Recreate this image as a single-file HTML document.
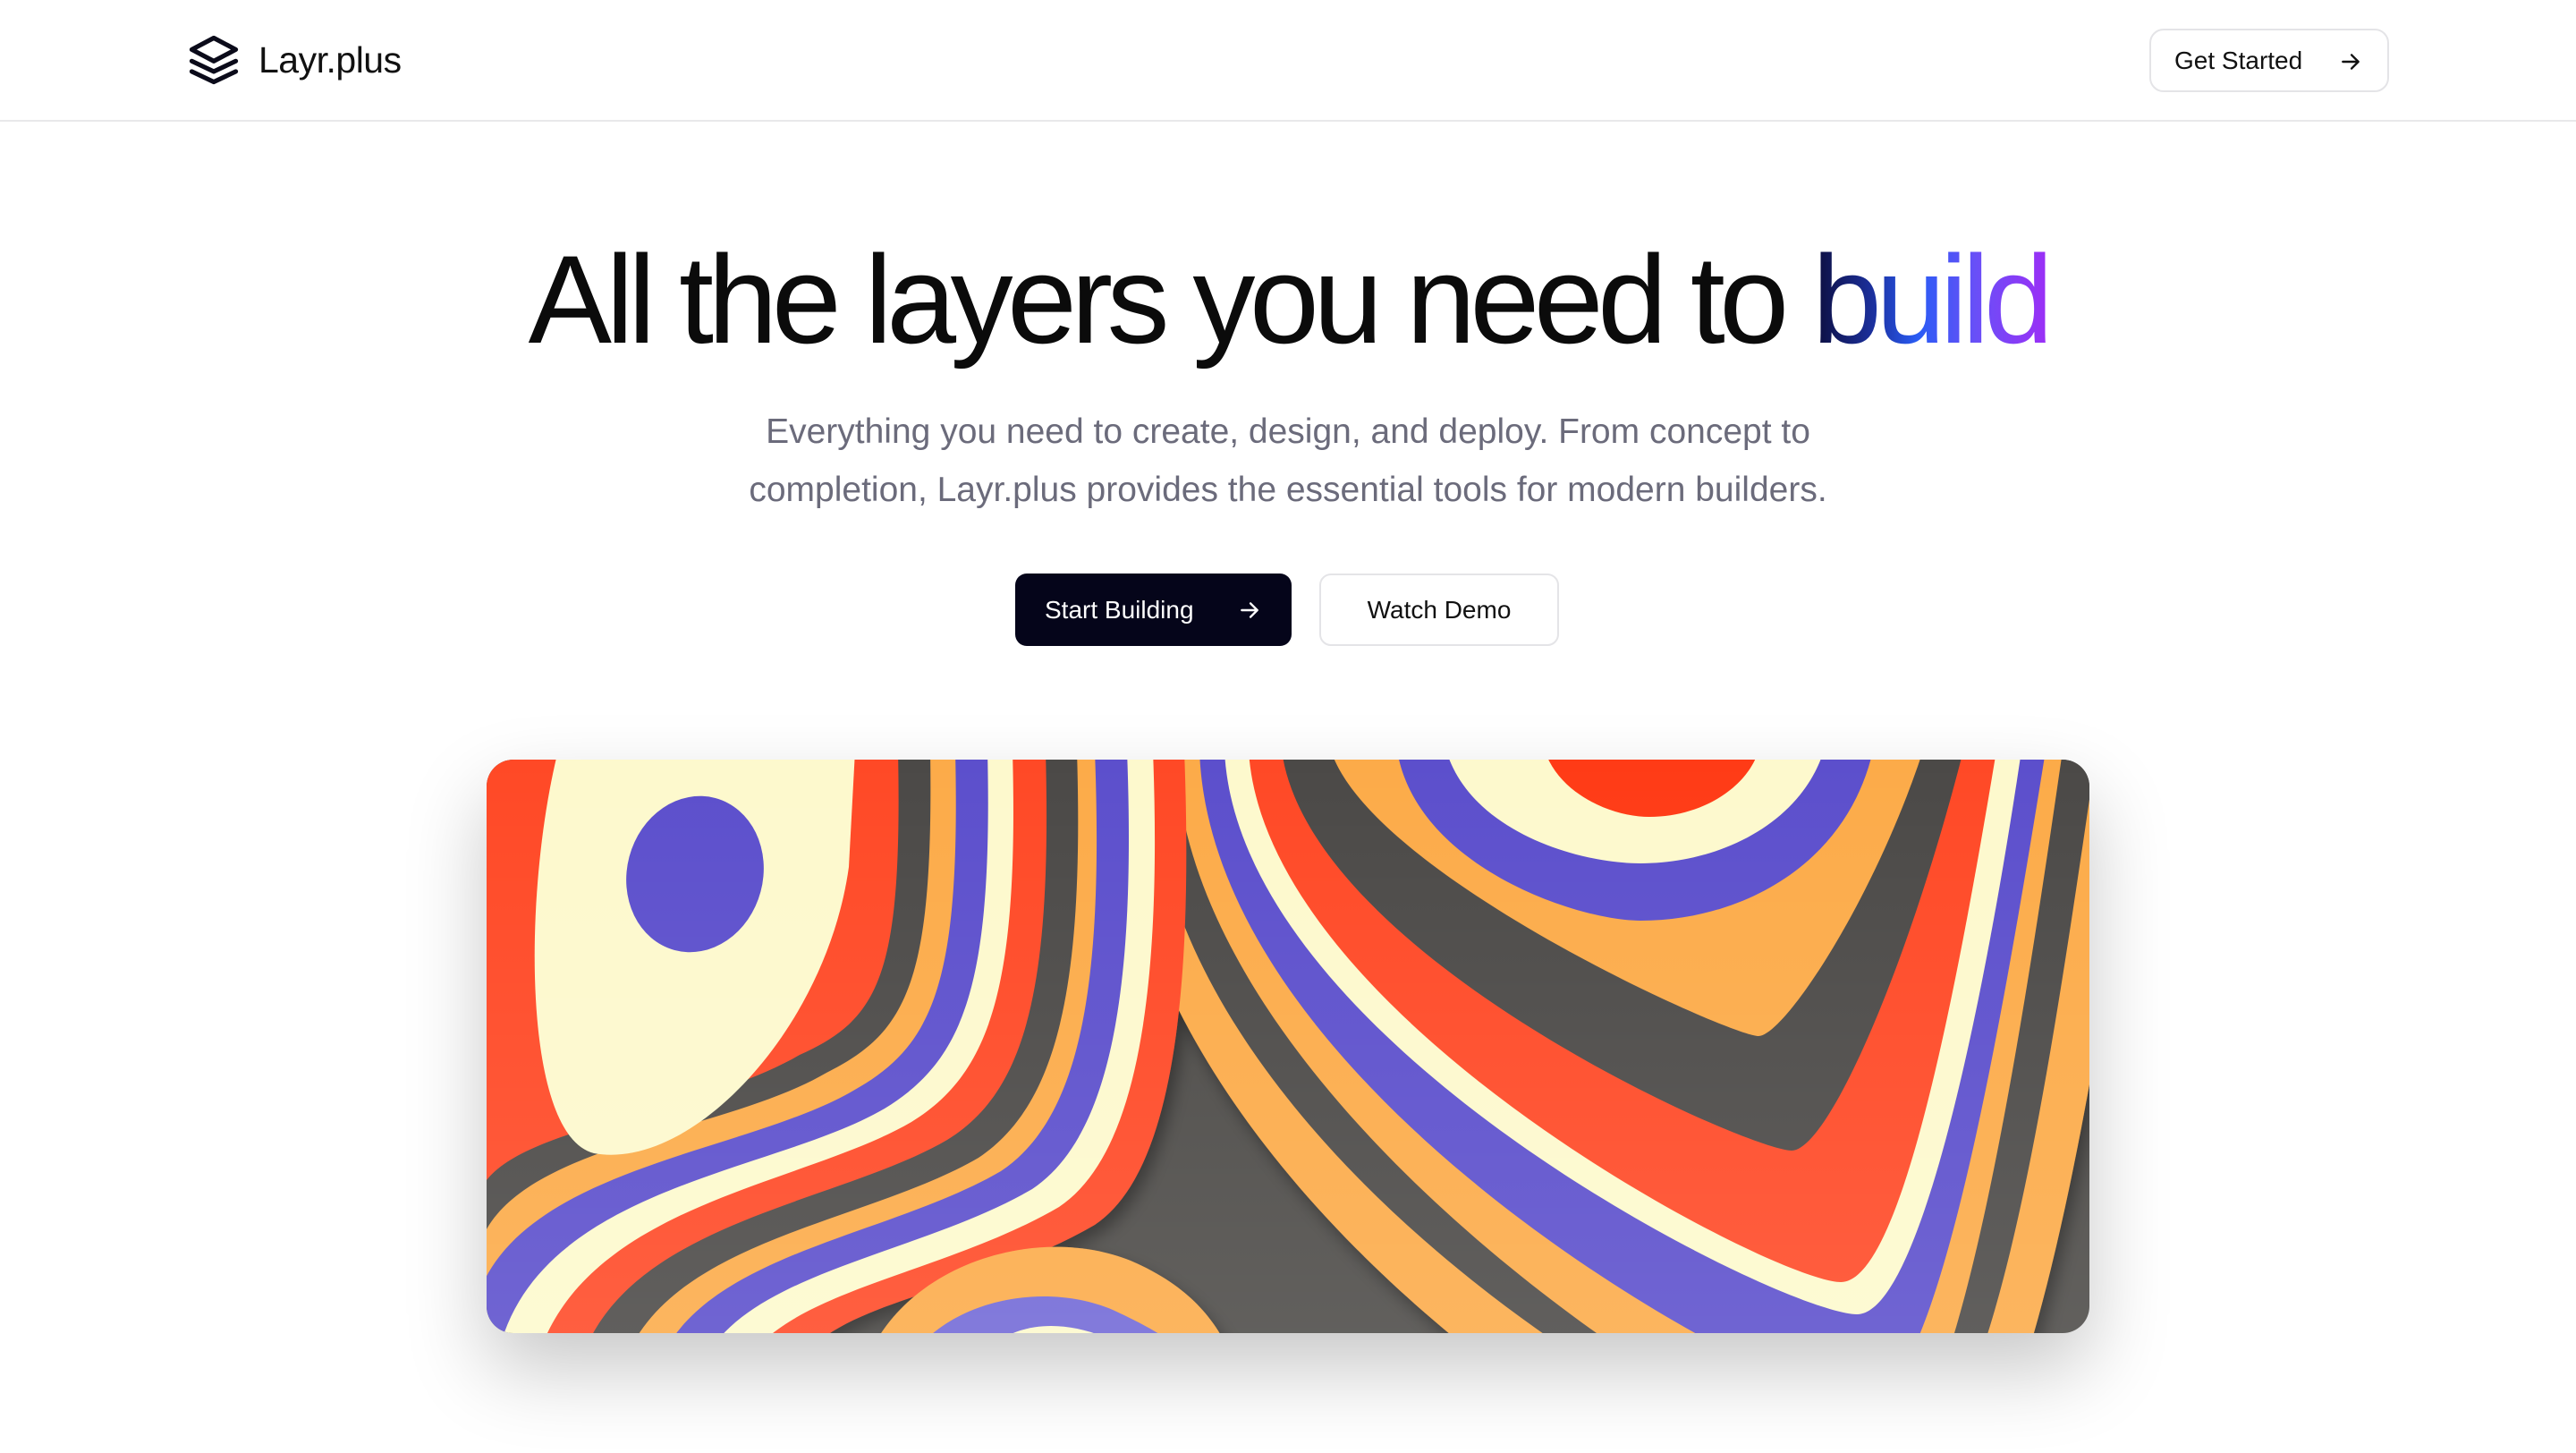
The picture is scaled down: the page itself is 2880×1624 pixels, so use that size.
<!DOCTYPE html>
<html><head><meta charset="utf-8"><style>
*{margin:0;padding:0;box-sizing:border-box}
html,body{overflow:hidden}
body{width:2880px;height:1624px;background:#fff;font-family:"Liberation Sans",sans-serif;color:#0b0b0f;position:relative}
.nav{position:absolute;left:0;top:0;width:2880px;height:136px;border-bottom:2px solid #e8e8ea}
.logo{position:absolute;left:208px;top:36px;width:62px;height:62px}
.brand{position:absolute;left:289px;top:44px;font-size:41px;color:#111;letter-spacing:-0.5px}
.gs{position:absolute;left:2403px;top:32px;width:268px;height:71px;border:2px solid #e4e4e7;border-radius:16px;font-size:28px;display:flex;align-items:center;padding-left:26px;color:#111}
.gs svg{position:absolute;right:28px;top:22px}
h1{position:absolute;left:0;width:2880px;top:250px;text-align:center;font-weight:400;font-size:140px;letter-spacing:-6.5px;line-height:170px;color:#0b0b0b}
h1 span{background:linear-gradient(90deg,#0c0c3a 0%,#1b2f9a 25%,#2a5cf5 45%,#6a4ff7 70%,#9b2ff6 100%);-webkit-background-clip:text;background-clip:text;color:transparent}
.sub{position:absolute;left:0;width:2880px;top:450px;text-align:center;font-size:39px;line-height:65px;color:#6b6b7b}
.b1{position:absolute;left:1135px;top:641px;width:309px;height:81px;background:#05051a;border-radius:13px;color:#fff;font-size:28px;display:flex;align-items:center;padding-left:33px}
.b1 svg{position:absolute;right:34px;top:28px}
.b2{position:absolute;left:1475px;top:641px;width:268px;height:81px;border:2px solid #e4e4e7;border-radius:13px;font-size:28px;display:flex;align-items:center;justify-content:center;color:#111}
.hero{position:absolute;left:544px;top:849px;width:1792px;height:641px;border-radius:30px;overflow:hidden;box-shadow:0 40px 90px rgba(0,0,0,.22)}
</style></head><body>
<div class="nav">
<svg class="logo" viewBox="0 0 24 24" fill="none" stroke="#0b0b1a" stroke-width="2" stroke-linecap="round" stroke-linejoin="round"><path d="M12 2.5 L2.5 7.5 L12 12.5 L21.5 7.5 Z"/><path d="M2.5 12.5 L12 17 L21.5 12.5"/><path d="M2.5 17 L12 21.5 L21.5 17"/></svg>
<div class="brand">Layr.plus</div>
<div class="gs">Get Started<svg width="26" height="26" viewBox="0 0 24 24" fill="none" stroke="#111" stroke-width="2.2" stroke-linecap="round" stroke-linejoin="round"><path d="M4 12h16M13 5l7 7-7 7"/></svg></div>
</div>
<h1>All the layers you need to <span>build</span></h1>
<div class="sub">Everything you need to create, design, and deploy. From concept to<br>completion, Layr.plus provides the essential tools for modern builders.</div>
<div class="b1">Start Building<svg width="26" height="26" viewBox="0 0 24 24" fill="none" stroke="#fff" stroke-width="2.2" stroke-linecap="round" stroke-linejoin="round"><path d="M4 12h16M13 5l7 7-7 7"/></svg></div>
<div class="b2">Watch Demo</div>
<div class="hero">
<svg width="1792" height="641" viewBox="0 0 1792 641">
<defs><filter id="s" x="-20%" y="-20%" width="140%" height="140%"><feDropShadow dx="6" dy="10" stdDeviation="9" flood-color="#000" flood-opacity=".45"/></filter>
<linearGradient id="fade" x1="0" y1="0" x2="0" y2="1"><stop offset="0" stop-color="#fff" stop-opacity="0"/><stop offset="1" stop-color="#fff" stop-opacity=".12"/></linearGradient></defs>
<rect width="1792" height="641" fill="#4c4a47"/>
<g filter="url(#s)">
<path d="M700 -10 C700 500 1400 900 1560 900 C1700 900 1780 500 1850 -10Z" fill="#fcab48"/>
<path d="M740 -10 C740 450 1420 820 1550 820 C1680 820 1740 400 1800 -10Z" fill="#4c4a47"/>
<path d="M770 -10 C780 400 1440 800 1545 800 C1640 800 1710 350 1762 -10Z" fill="#fcab48"/>
<path d="M797 -10 C810 380 1450 720 1540 720 C1620 720 1690 320 1743 -10Z" fill="#5b4fcc"/>
<path d="M825 -10 C840 320 1450 620 1532 620 C1600 620 1670 300 1716 -10Z" fill="#fdf9cd"/>
<path d="M852 -10 C870 290 1440 584 1514 584 C1580 584 1640 280 1688 -10Z" fill="#ff4a28"/>
<path d="M889 -10 C920 220 1410 437 1459 437 C1500 437 1590 230 1651 -10Z" fill="#4c4a47"/>
<path d="M944 -10 C990 130 1390 309 1422 309 C1450 309 1550 160 1606 -10Z" fill="#fcab48"/>
<path d="M1018 -10 C1040 120 1220 180 1290 180 C1400 180 1520 120 1550 -10Z" fill="#5b4fcc"/>
<path d="M1073 -10 C1100 80 1220 116 1290 116 C1380 116 1470 70 1495 -10Z" fill="#fdf9cd"/>
<path d="M1183 -10 C1200 40 1260 64 1300 64 C1360 64 1410 30 1422 -10Z" fill="#ff3a14"/>
<path d="M-10 -10 L780 -10 C790 250 770 460 680 520 C560 590 420 600 360 660 L-10 660Z" fill="#ff4a28"/>
<path d="M-10 -10 L745 -10 C755 250 730 440 640 500 C520 570 360 590 300 660 L-10 660Z" fill="#fdf9cd"/>
<path d="M-10 -10 L716 -10 C726 250 700 420 610 480 C490 550 310 570 250 660 L-10 660Z" fill="#5b4fcc"/>
<path d="M-10 -10 L680 -10 C690 250 665 400 575 460 C455 530 260 550 200 660 L-10 660Z" fill="#fcab48"/>
<path d="M-10 -10 L660 -10 C668 250 640 385 550 445 C430 515 220 535 160 660 L-10 660Z" fill="#4c4a47"/>
<path d="M-10 -10 L625 -10 C632 250 605 370 515 425 C395 495 170 515 110 660 L-10 660Z" fill="#ff4a28"/>
<path d="M-10 -10 L588 -10 C595 250 565 350 475 405 C355 475 120 495 60 660 L-10 660Z" fill="#fdf9cd"/>
<path d="M-10 -10 L560 -10 C566 250 535 335 445 390 C325 460 80 475 20 640 L-10 660Z" fill="#5b4fcc"/>
<path d="M-10 -10 L524 -10 C530 250 500 320 410 370 C290 440 40 455 -10 600Z" fill="#fcab48"/>
<path d="M-10 -10 L496 -10 C500 250 470 305 380 350 C260 420 20 430 -10 550Z" fill="#4c4a47"/>
<path d="M-10 -10 L460 -10 C465 240 440 290 350 330 C230 400 10 410 -10 490Z" fill="#ff4a28"/>
<path d="M80 -10 C40 150 40 420 120 440 C230 460 380 300 405 120 L412 -10Z" fill="#fdf9cd"/>
<ellipse cx="233" cy="128" rx="76" ry="88" transform="rotate(15 233 128)" fill="#5b4fcc"/>
<path d="M430 660 C480 560 620 520 720 560 C790 590 815 630 830 660Z" fill="#fcab48"/>
<path d="M480 660 C530 600 630 585 700 615 C750 638 765 650 775 660Z" fill="#7168d6"/>
<path d="M560 660 C590 630 640 625 690 645 L700 660Z" fill="#fdf9cd"/>
</g>
<rect width="1792" height="641" fill="url(#fade)"/>
</svg>
</div>
</body></html>
